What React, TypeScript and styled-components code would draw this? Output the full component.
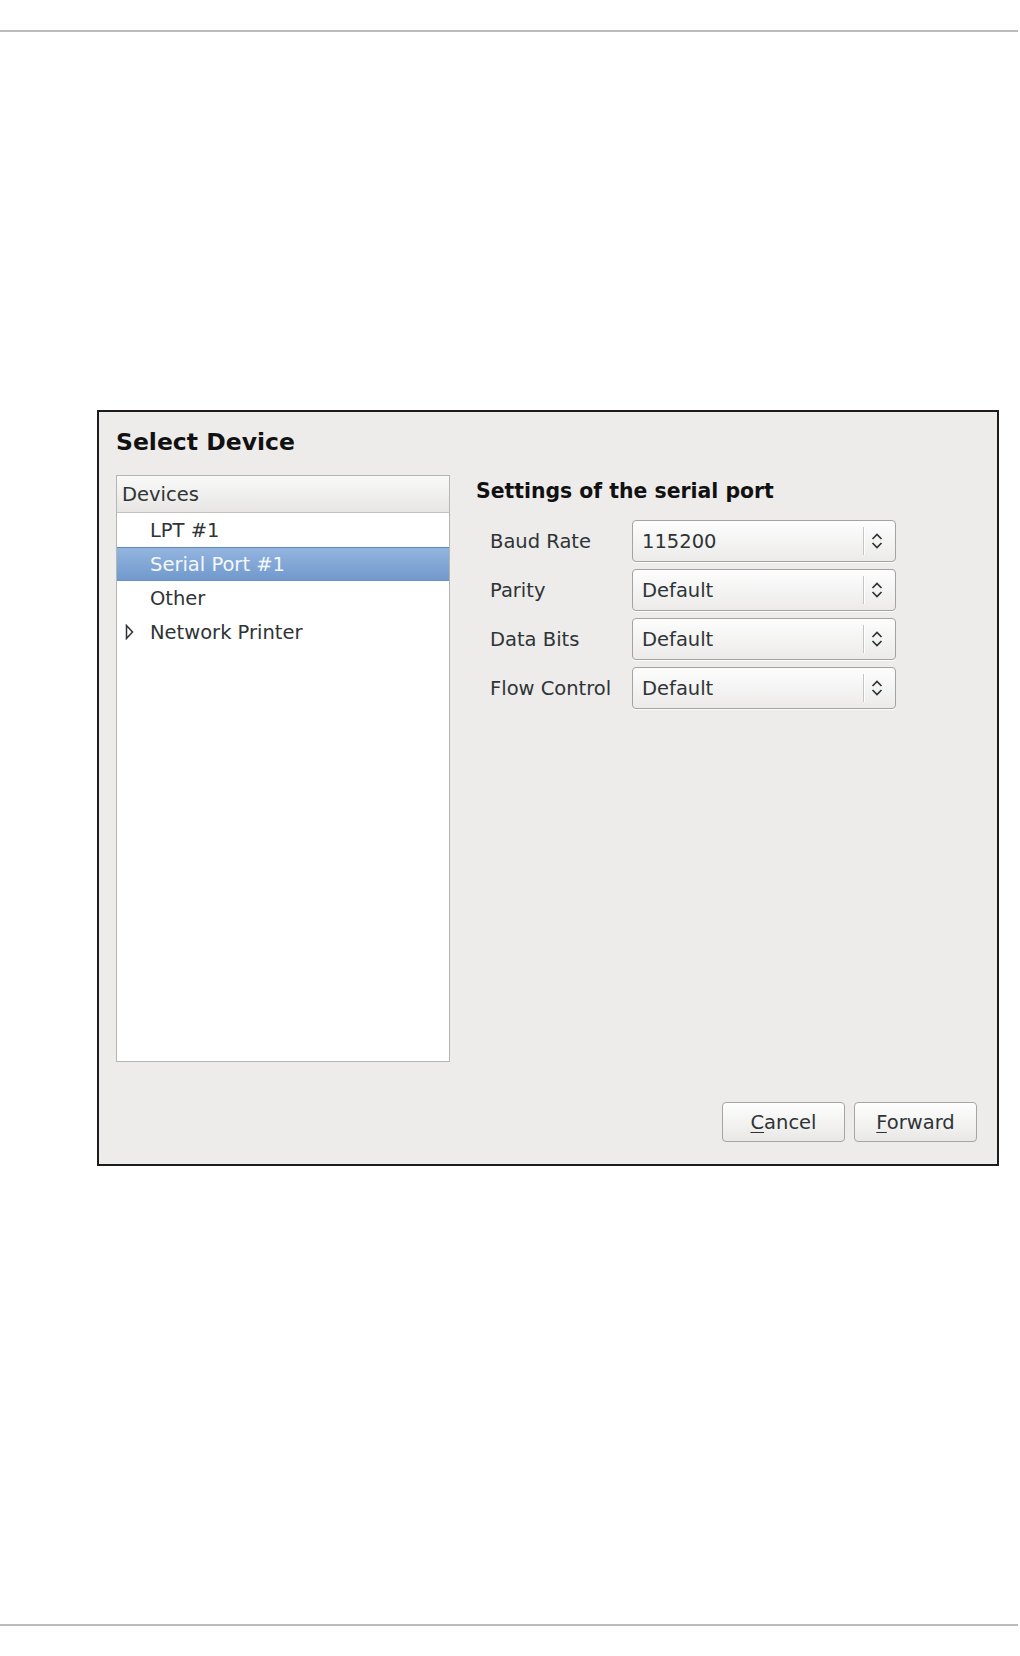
import styled, { createGlobalStyle } from 'styled-components';

const GlobalStyle = createGlobalStyle`
  html, body {
    margin: 0;
    padding: 0;
    background: #ffffff;
  }
  body {
    font-family: 'DejaVu Sans', 'Liberation Sans', sans-serif;
    color: #2e3436;
  }
`;

const Page = styled.div`
  min-height: 1656px;
  display: flex;
  flex-direction: column;
`;

const Rule = styled.hr<{ $bottom?: boolean }>`
  border: none;
  height: 2px;
  background: #bcbcbc;
  margin: ${({ $bottom }) => ($bottom ? 'auto 0 30px 0' : '30px 0 0 0')};
  width: 1018px;
`;

const Dialog = styled.section`
  margin: 378px 0 0 97px;
  width: 902px;
  height: 756px;
  box-sizing: border-box;
  border: 2px solid #1c1c1c;
  background: #edeceb;
  display: flex;
  flex-direction: column;
  padding: 16px 20px 22px 17px;
`;

const Title = styled.h2`
  margin: 0;
  font-size: 23.5px;
  line-height: 29px;
  font-weight: bold;
  color: #111;
`;

const Body = styled.div`
  display: flex;
  margin-top: 18px;
`;

const DeviceList = styled.div`
  width: 334px;
  height: 587px;
  box-sizing: border-box;
  border: 1px solid #b5b5b3;
  background: #ffffff;
  display: flex;
  flex-direction: column;
`;

const ListHeader = styled.div`
  height: 37px;
  box-sizing: border-box;
  padding-left: 5px;
  display: flex;
  align-items: center;
  font-size: 19.5px;
  background: linear-gradient(#f9f9f8, #e7e6e4);
  border-bottom: 1px solid #c4c3c0;
  color: #2e3436;
`;

const Row = styled.div<{ $selected?: boolean }>`
  height: 34px;
  box-sizing: border-box;
  display: flex;
  align-items: center;
  font-size: 19.5px;
  padding-left: 33px;
  position: relative;
  color: ${({ $selected }) => ($selected ? '#f4f7fb' : '#2e3436')};
  background: ${({ $selected }) =>
    $selected ? 'linear-gradient(#93b5df, #7199cc)' : 'transparent'};
  border-top: 1px solid ${({ $selected }) => ($selected ? '#5f88bf' : 'transparent')};
  border-bottom: 1px solid ${({ $selected }) => ($selected ? '#6690c6' : 'transparent')};
`;

const Expander = styled.svg`
  position: absolute;
  left: 8px;
  top: 8px;
`;

const Settings = styled.div`
  margin-left: 26px;
  display: flex;
  flex-direction: column;
`;

const SectionTitle = styled.h3`
  margin: 0;
  font-size: 20.4px;
  line-height: 26px;
  font-weight: bold;
  color: #111;
  margin-top: 3px;
`;

const FieldGrid = styled.div`
  display: grid;
  grid-template-columns: 142px 264px;
  grid-auto-rows: 42px;
  row-gap: 7px;
  padding-left: 14px;
  margin-top: 16px;
`;

const Label = styled.label`
  display: flex;
  align-items: center;
  font-size: 19.5px;
  color: #2e3436;
`;

const Combo = styled.div`
  display: flex;
  align-items: stretch;
  box-sizing: border-box;
  border: 1px solid #a3a3a1;
  border-radius: 4px;
  background: linear-gradient(#fdfdfd, #ecebea);
  box-shadow: 0 1px 0 rgba(255, 255, 255, 0.8);
`;

const ComboValue = styled.span`
  flex: 1;
  display: flex;
  align-items: center;
  padding-left: 9px;
  font-size: 19.5px;
  color: #2e3436;
`;

const ComboSeparator = styled.span`
  width: 1px;
  margin: 6px 0;
  background: #c6c5c3;
  box-shadow: 1px 0 0 #ffffff;
`;

const ComboArrow = styled.span`
  width: 31px;
  box-sizing: border-box;
  padding-left: 7px;
  display: flex;
  align-items: center;
`;

const ButtonRow = styled.div`
  margin-top: auto;
  display: flex;
  justify-content: flex-end;
  gap: 9px;
`;

const Button = styled.button`
  width: 123px;
  height: 40px;
  box-sizing: border-box;
  border: 1px solid #a6a5a3;
  border-radius: 4px;
  background: linear-gradient(#fefefe, #e9e8e6);
  font-family: 'DejaVu Sans', 'Liberation Sans', sans-serif;
  font-size: 19.5px;
  color: #2e3436;
  padding: 0;

  u {
    text-underline-offset: 3px;
  }
`;

const Chevrons = () => (
  <svg width='12' height='20' viewBox='0 0 12 20'>
    <path d='M1.5 8 L6 3.5 L10.5 8' fill='none' stroke='#2e3436' strokeWidth='1.7' />
    <path d='M1.5 12 L6 16.5 L10.5 12' fill='none' stroke='#2e3436' strokeWidth='1.7' />
  </svg>
);

const fields = [
  { label: 'Baud Rate', value: '115200' },
  { label: 'Parity', value: 'Default' },
  { label: 'Data Bits', value: 'Default' },
  { label: 'Flow Control', value: 'Default' },
];

const App = () => {
  return (
    <Page>
      <GlobalStyle />
      <Rule />
      <Dialog>
        <Title>Select Device</Title>
        <Body>
          <DeviceList>
            <ListHeader>Devices</ListHeader>
            <Row>LPT #1</Row>
            <Row $selected>Serial Port #1</Row>
            <Row>Other</Row>
            <Row>
              <Expander width='9' height='16' viewBox='0 0 9 16'>
                <path d='M1.5 1.5 L7.5 8 L1.5 14.5 Z' fill='none' stroke='#2e3436' strokeWidth='1.5' />
              </Expander>
              Network Printer
            </Row>
          </DeviceList>
          <Settings>
            <SectionTitle>Settings of the serial port</SectionTitle>
            <FieldGrid>
              {fields.map((f) => (
                <>
                  <Label key={f.label + '-l'}>{f.label}</Label>
                  <Combo key={f.label + '-c'}>
                    <ComboValue>{f.value}</ComboValue>
                    <ComboSeparator />
                    <ComboArrow>
                      <Chevrons />
                    </ComboArrow>
                  </Combo>
                </>
              ))}
            </FieldGrid>
          </Settings>
        </Body>
        <ButtonRow>
          <Button>
            <u>C</u>ancel
          </Button>
          <Button>
            <u>F</u>orward
          </Button>
        </ButtonRow>
      </Dialog>
      <Rule $bottom />
    </Page>
  );
};

export default App;
